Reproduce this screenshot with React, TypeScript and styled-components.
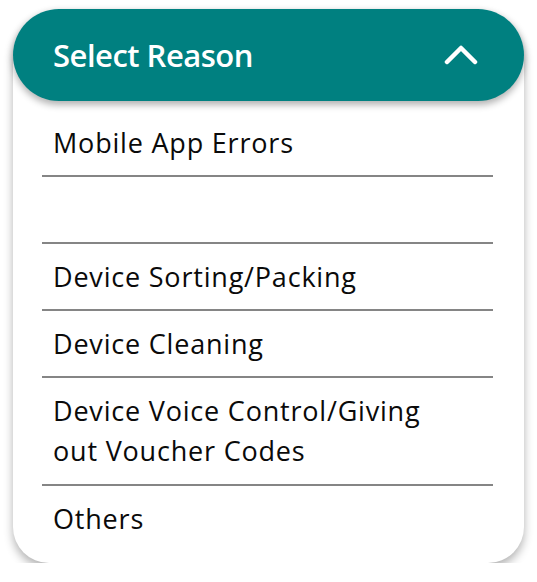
import React from "react";
import styled, { createGlobalStyle } from "styled-components";

const Global = createGlobalStyle`
  html, body { margin: 0; padding: 0; background: #ffffff; }
  body { font-family: "Open Sans", "Noto Sans", sans-serif; }
`;

const Page = styled.div`
  padding: 9px 13px 0 13px;
  width: 511px;
`;

const Card = styled.div`
  background: #ffffff;
  border-radius: 46px 46px 36px 36px;
  box-shadow: 0 5px 10px rgba(0, 0, 0, 0.3);
`;

const Header = styled.div`
  height: 92px;
  background: #008080;
  border-radius: 46px;
  box-shadow: 0 4px 7px rgba(0, 0, 0, 0.3);
  display: flex;
  align-items: center;
  justify-content: space-between;
  padding: 0 46px 0 40px;
  box-sizing: border-box;
`;

const Title = styled.span`
  color: #ffffff;
  font-size: 31px;
  font-weight: 600;
  letter-spacing: -0.5px;
`;

const List = styled.ul`
  list-style: none;
  margin: 0;
  padding: 9px 31px 12px 29px;
`;

const Item = styled.li<{ $last?: boolean; $tall?: boolean }>`
  padding: 13px 11px ${(p) => (p.$tall ? "13px" : "12px")} 11px;
  border-bottom: ${(p) => (p.$last ? "none" : "2px solid #858585")};
  font-size: 27px;
  letter-spacing: 0.8px;
  line-height: 40px;
  color: #0a0a0a;
  min-height: 40px;
`;

const Chevron = () => (
  <svg width="34" height="20" viewBox="0 0 34 20" aria-hidden="true">
    <path
      d="M3 17 L17 3 L31 17"
      fill="none"
      stroke="#ffffff"
      strokeWidth="4.5"
      strokeLinecap="round"
      strokeLinejoin="round"
    />
  </svg>
);

const reasons: string[] = [
  "Mobile App Errors",
  "",
  "Device Sorting/Packing",
  "Device Cleaning",
  "Device Voice Control/Giving\nout Voucher Codes",
  "Others",
];

export default function App() {
  return (
    <>
      <Global />
      <Page>
        <Card>
          <Header>
            <Title>Select Reason</Title>
            <Chevron />
          </Header>
          <List>
            {reasons.map((r, i) => {
              const lines = r.split("\n");
              return (
                <Item
                  key={i}
                  $last={i === reasons.length - 1}
                  $tall={lines.length > 1}
                >
                  {lines.map((line, j) => (
                    <div key={j}>{line}</div>
                  ))}
                </Item>
              );
            })}
          </List>
        </Card>
      </Page>
    </>
  );
}
